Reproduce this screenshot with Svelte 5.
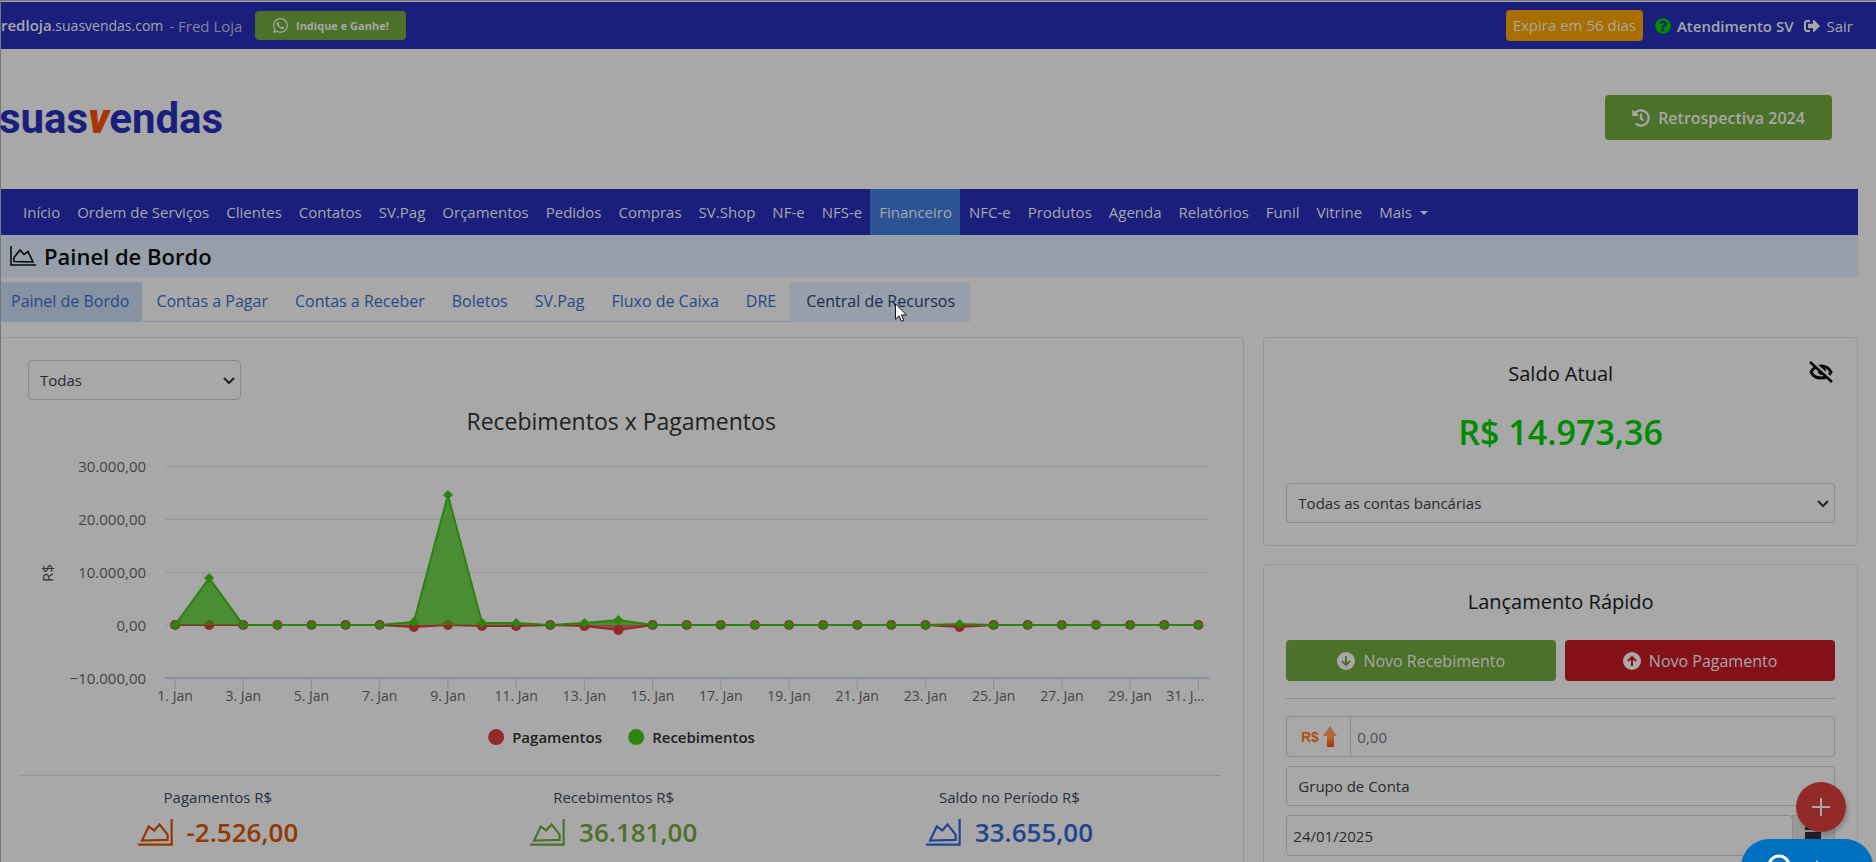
<script lang="ts">
  type Point = { x: number; y: number };

  const menu = [
    'Início', 'Ordem de Serviços', 'Clientes', 'Contatos', 'SV.Pag', 'Orçamentos', 'Pedidos',
    'Compras', 'SV.Shop', 'NF-e', 'NFS-e', 'Financeiro', 'NFC-e', 'Produtos', 'Agenda',
    'Relatórios', 'Funil', 'Vitrine'
  ];
  const tabs = ['Painel de Bordo', 'Contas a Pagar', 'Contas a Receber', 'Boletos', 'SV.Pag', 'Fluxo de Caixa', 'DRE'];

  const totals = [
    { label: 'Pagamentos R$', value: '-2.526,00', kind: 'out' },
    { label: 'Recebimentos R$', value: '36.181,00', kind: 'in' },
    { label: 'Saldo no Período R$', value: '33.655,00', kind: 'net' }
  ];

  // daily values, only the days that are not zero
  const received: Record<number, number> = { 2: 8800, 8: 650, 9: 24500, 10: 400, 11: 400, 13: 400, 14: 900, 24: 250 };
  const paid: Record<number, number> = { 8: -450, 10: -250, 11: -250, 13: -250, 14: -900, 24: -300 };

  const days = Array.from({ length: 31 }, (_, i) => i + 1);
  const levels = [
    { value: 30000, label: '30.000,00' },
    { value: 20000, label: '20.000,00' },
    { value: 10000, label: '10.000,00' },
    { value: 0, label: '0,00' },
    { value: -10000, label: '−10.000,00' }
  ];

  const dayX = (day: number) => 155 + ((day - 1) * 1023) / 30;
  const valueY = (value: number) => Math.round(225 - (value * 53) / 10000);

  function toPoints(data: Record<number, number>): Point[] {
    return days.map((day) => ({ x: dayX(day), y: valueY(data[day] ?? 0) }));
  }

  function toLine(points: Point[]) {
    return points.map((p) => `${p.x},${p.y}`).join(' ');
  }

  function toArea(points: Point[]) {
    return `${dayX(1)},${valueY(0)} ${toLine(points)} ${dayX(31)},${valueY(0)}`;
  }

  const paidPoints = toPoints(paid);
  const receivedPoints = toPoints(received);
</script>

{#snippet chevron()}
  <svg class="chevron" viewBox="0 0 12 8" aria-hidden="true"><path d="M1 1l5 5 5-5" fill="none" stroke="currentColor" stroke-width="2" /></svg>
{/snippet}

{#snippet areaIcon()}
  <svg class="area-icon" viewBox="0 0 26 20" aria-hidden="true">
    <path d="M1 0v19h25" fill="none" stroke="currentColor" stroke-width="1.6" />
    <path d="M4 15.500v-4l6-7.500 4 4.500 4-3 5 10.500z" fill="none" stroke="currentColor" stroke-width="1.6" />
  </svg>
{/snippet}

<div class="page">
  <header class="topbar">
    <div class="account">
      <span class="domain"><b>redloja</b>.suasvendas.com</span>
      <span class="store">- Fred Loja</span>
      <button type="button" class="btn refer">
        <svg viewBox="0 0 448 512" aria-hidden="true"><path fill="currentColor" d="M380.9 97.1C339 55.1 283.2 32 223.9 32c-122.4 0-222 99.6-222 222 0 39.1 10.2 77.3 29.6 111L0 480l117.7-30.9c32.4 17.7 68.9 27 106.1 27h.1c122.3 0 224.1-99.6 224.1-222 0-59.3-25.2-115-67.1-157zm-157 341.6c-33.2 0-65.7-8.9-94-25.7l-6.7-4-69.8 18.3L72 359.2l-4.4-7c-18.5-29.4-28.2-63.3-28.2-98.2 0-101.7 82.8-184.5 184.6-184.5 49.3 0 95.6 19.2 130.4 54.1 34.8 34.9 56.2 81.2 56.1 130.5 0 101.8-84.9 184.6-186.6 184.6zm101.2-138.2c-5.5-2.8-32.8-16.2-37.9-18-5.1-1.9-8.8-2.8-12.5 2.8-3.7 5.6-14.3 18-17.6 21.8-3.2 3.7-6.5 4.2-12 1.4-32.6-16.3-54-29.1-75.5-66-5.7-9.8 5.7-9.1 16.3-30.3 1.8-3.7.9-6.9-.5-9.7-1.4-2.8-12.5-30.1-17.1-41.2-4.5-10.8-9.1-9.3-12.5-9.5-3.2-.2-6.9-.2-10.6-.2-3.7 0-9.7 1.4-14.8 6.9-5.1 5.6-19.4 19-19.4 46.3 0 27.3 19.9 53.7 22.6 57.4 2.8 3.7 39.1 59.7 94.8 83.8 35.2 15.2 49 16.5 66.6 13.9 10.7-1.6 32.8-13.4 37.4-26.4 4.6-13 4.6-24.1 3.2-26.4-1.3-2.5-5-3.9-10.5-6.6z" /></svg>
        Indique e Ganhe!
      </button>
    </div>
    <div class="session">
      <span class="expires">Expira em 56 dias</span>
      <a href="#suporte" class="support">
        <svg viewBox="0 0 512 512" aria-hidden="true"><path fill="#008c00" d="M504 256c0 136.997-111.043 248-248 248S8 392.997 8 256C8 119.083 119.043 8 256 8s248 111.083 248 248zM262.655 90c-54.497 0-89.255 22.957-116.549 63.758-3.536 5.286-2.353 12.415 2.715 16.258l34.699 26.31c5.205 3.947 12.621 3.008 16.665-2.122 17.864-22.658 30.113-35.797 57.303-35.797 20.429 0 45.698 13.148 45.698 32.958 0 14.976-12.363 22.667-32.534 33.976C247.128 238.528 216 254.941 216 296v4c0 6.627 5.373 12 12 12h56c6.627 0 12-5.373 12-12v-1.333c0-28.462 83.186-29.647 83.186-106.667 0-58.002-60.165-102-116.531-102zM256 338c-25.365 0-46 20.635-46 46 0 25.364 20.635 46 46 46s46-20.636 46-46c0-25.365-20.635-46-46-46z" /></svg>
        <b>Atendimento SV</b>
      </a>
      <a href="#sair">
        <svg viewBox="0 0 512 512" aria-hidden="true"><path fill="currentColor" d="M497 273L329 441c-15 15-41 4.500-41-17v-96H152c-13.300 0-24-10.700-24-24v-96c0-13.300 10.700-24 24-24h136V88c0-21.400 25.900-32 41-17l168 168c9.300 9.400 9.300 24.600 0 34zM192 436v-40c0-6.600-5.400-12-12-12H96c-17.700 0-32-14.300-32-32V160c0-17.700 14.300-32 32-32h84c6.600 0 12-5.400 12-12V76c0-6.600-5.400-12-12-12H96c-53 0-96 43-96 96v192c0 53 43 96 96 96h84c6.600 0 12-5.400 12-12z" /></svg>
        Sair
      </a>
    </div>
  </header>

  <div class="brand">
    <a href="#inicio" class="logo">suas<i>v</i>endas</a>
    <button type="button" class="btn retro">
      <svg viewBox="0 0 512 512" aria-hidden="true"><path fill="currentColor" d="M504 255.531c.253 136.640-111.180 248.372-247.820 248.468-59.015.042-113.223-20.530-155.822-54.911-11.077-8.940-11.905-25.541-1.839-35.607l11.267-11.267c8.609-8.609 22.353-9.551 31.891-1.984C173.062 425.135 212.781 440 256 440c101.705 0 184-82.311 184-184 0-101.705-82.311-184-184-184-48.814 0-93.149 18.969-126.068 49.932l50.754 50.754c10.080 10.080 2.941 27.314-11.313 27.314H24c-8.837 0-16-7.163-16-16V38.627c0-14.254 17.234-21.393 27.314-11.314l49.372 49.372C129.209 34.136 189.552 8 256 8c136.810 0 247.747 110.780 248 247.531zm-180.912 78.784l9.823-12.630c8.138-10.463 6.253-25.542-4.210-33.679L288 256.349V152c0-13.255-10.745-24-24-24h-16c-13.255 0-24 10.745-24 24v135.651l65.409 50.874c10.463 8.137 25.541 6.253 33.679-4.210z" /></svg>
      Retrospectiva 2024
    </button>
  </div>

  <main>
    <nav class="menu">
      {#each menu as item}
        <a href="#menu" class:active={item === 'Financeiro'}>{item}</a>
      {/each}
      <a href="#mais" class="more">Mais</a>
    </nav>

    <h1>{@render areaIcon()}Painel de Bordo</h1>

    <nav class="tabs">
      {#each tabs as tab, i}
        <a href="#aba" class:active={i === 0}>{tab}</a>
      {/each}
      <a href="#recursos" class="hovered">
        Central de Recursos
        <svg class="pointer" viewBox="0 0 12 19" aria-hidden="true"><path d="M.5.8v15.500l3.600-3.400 2.400 5.400 2.300-1-2.300-5.300h5z" fill="#fff" stroke="#111" /></svg>
      </a>
    </nav>

    <div class="columns">
      <section class="card overview">
        <div class="select filter">
          <select aria-label="Filtro"><option>Todas</option></select>
          {@render chevron()}
        </div>

        <svg class="chart" viewBox="0 0 1201 360" role="img" aria-label="Recebimentos x Pagamentos">
          <text class="chart-title" x="601" y="30">Recebimentos x Pagamentos</text>
          {#each levels as level}
            <line class="grid" x1="145" x2="1189" y1={valueY(level.value) + 0.5} y2={valueY(level.value) + 0.5} />
            <text class="level" x="126" y={valueY(level.value) + 6}>{level.label}</text>
          {/each}
          <text class="unit" transform="translate(33 173) rotate(-90)">R$</text>
          <line class="axis" x1="145" x2="1189" y1="278" y2="278" />
          {#each days.filter((d) => d % 2 === 1) as day}
            <line class="tick" x1={dayX(day)} x2={dayX(day)} y1="278" y2="290" />
            <text class="day" x={day === 31 ? 1165 : dayX(day)} y="301">{day === 31 ? '31. J…' : `${day}. Jan`}</text>
          {/each}

          <polygon class="paid-area" points={toArea(paidPoints)} />
          <polyline class="paid-line" points={toLine(paidPoints)} />
          {#each paidPoints as p}
            <circle class="paid" cx={p.x} cy={p.y} r="5" />
          {/each}
          <polygon class="received-area" points={toArea(receivedPoints)} />
          <polyline class="received-line" points={toLine(receivedPoints)} />
          {#each receivedPoints as p}
            <path class="received" d={`M${p.x} ${p.y - 5}l5 5-5 5-5-5z`} />
          {/each}

          <circle class="paid" cx="476" cy="337" r="8" />
          <text class="legend" x="492" y="343">Pagamentos</text>
          <circle class="received" cx="616" cy="337" r="8" />
          <text class="legend" x="632" y="343">Recebimentos</text>
        </svg>

        <div class="totals">
          {#each totals as total}
            <div class="total {total.kind}">
              <span>{total.label}</span>
              <strong>{@render areaIcon()}{total.value}</strong>
            </div>
          {/each}
        </div>
      </section>

      <aside>
        <section class="card">
          <h2>Saldo Atual</h2>
          <button type="button" class="hide" aria-label="Ocultar saldo">
            <svg viewBox="0 0 24 22" aria-hidden="true">
              <path d="M2 11C6 3 18 3 22 11 18 19 6 19 2 11z" fill="none" stroke="currentColor" stroke-width="3" />
              <circle cx="13" cy="10" r="4" fill="currentColor" />
              <path d="M3 0l21 19" stroke="#a8a8a8" stroke-width="2.5" />
              <path d="M1 1l22 20" stroke="currentColor" stroke-width="2.5" />
            </svg>
          </button>
          <p class="balance">R$ 14.973,36</p>
          <div class="select">
            <select aria-label="Conta bancária"><option>Todas as contas bancárias</option></select>
            {@render chevron()}
          </div>
        </section>

        <section class="card entry">
          <h2>Lançamento Rápido</h2>
          <div class="actions">
            <button type="button" class="btn">
              <svg viewBox="0 0 18 18" aria-hidden="true"><circle cx="9" cy="9" r="9" fill="currentColor" /><path d="M9 4v9M5 9l4 4 4-4" fill="none" stroke="#4c7128" stroke-width="2" /></svg>
              Novo Recebimento
            </button>
            <button type="button" class="btn danger">
              <svg viewBox="0 0 18 18" aria-hidden="true"><circle cx="9" cy="9" r="9" fill="currentColor" /><path d="M9 14V5M5 9l4-4 4 4" fill="none" stroke="#851118" stroke-width="2" /></svg>
              Novo Pagamento
            </button>
          </div>
          <hr />
          <div class="group">
            <label for="amount">
              R$
              <svg viewBox="0 0 14 21" aria-hidden="true">
                <defs><linearGradient id="rise" x2="0" y2="1"><stop offset="0" stop-color="#b06a3c" /><stop offset=".5" stop-color="#b5673a" /><stop offset="1" stop-color="#a83400" /></linearGradient></defs>
                <path d="M7 0l7 10h-3v11H4V10H0z" fill="url(#rise)" />
              </svg>
            </label>
            <input id="amount" type="text" placeholder="0,00" />
          </div>
          <div class="select">
            <select aria-label="Grupo de Conta"><option>Grupo de Conta</option></select>
            {@render chevron()}
          </div>
          <div class="group">
            <input type="text" value="24/01/2025" aria-label="Data" />
            <button type="button" class="calendar" aria-label="Calendário">
              <svg viewBox="0 0 16 18" aria-hidden="true"><path d="M0 2h3V0h3v2h4V0h3v2h3v3H0zM0 7h16v11H0z" fill="#202026" /></svg>
            </button>
          </div>
        </section>
      </aside>
    </div>
  </main>

  <button type="button" class="fab" aria-label="Adicionar">
    <svg viewBox="0 0 18 18" aria-hidden="true"><path d="M9 0v18M0 9h18" stroke="currentColor" stroke-width="2" /></svg>
  </button>
  <button type="button" class="chat" aria-label="Ajuda">
    <svg viewBox="0 0 80 24" aria-hidden="true"><circle cx="12" cy="12" r="10" fill="none" stroke="#fff" stroke-width="3" /><path d="M50 6l4 10h-8z" fill="#fff" /></svg>
  </button>
</div>

<style>
  :global(body) {
    overflow: hidden;
    background: #a8a8a8;
  }

  .page {
    min-height: 100vh;
    box-sizing: border-box;
    padding-top: 1px;
    border-top: 1px solid #777777;
    border-left: 1px solid #777777;
    background: #a8a8a8;
    color: #1a1c20;
    font-family: 'Open Sans', 'Noto Sans', sans-serif;
    font-size: 15px;
    line-height: 24px;
  }

  a {
    color: inherit;
    text-decoration: none;
  }

  b {
    font-weight: 600;
  }

  svg {
    flex-shrink: 0;
  }

  .btn {
    display: flex;
    align-items: center;
    justify-content: center;
    gap: 8px;
    padding: 0;
    border: none;
    border-radius: 4px;
    background: #4c7128;
    color: #a8a8a8;
    font-family: inherit;
    font-weight: 600;
    cursor: pointer;
  }

  .topbar {
    display: flex;
    align-items: center;
    justify-content: space-between;
    height: 47px;
    padding-right: 23px;
    background: #1a1e7c;
    color: #a8a8a8;
    white-space: nowrap;
  }

  .account,
  .session,
  .session a {
    display: flex;
    align-items: center;
  }

  .domain {
    font-size: 14px;
  }

  .domain b {
    font-size: 15px;
  }

  .store {
    margin: 0 13px 0 6px;
    color: #80829a;
  }

  .refer {
    width: 151px;
    height: 29px;
    font-size: 11px;
    font-weight: 700;
  }

  .refer svg {
    width: 15px;
    height: 17px;
  }

  .session {
    gap: 12px;
  }

  .session a {
    gap: 7px;
  }

  .session svg {
    width: 16px;
    height: 16px;
  }

  .expires {
    padding: 3px 7px 4px;
    border-radius: 4px;
    background: #a86e00;
  }

  .session .support {
    gap: 6px;
    margin-right: -2px;
  }

  .brand {
    display: flex;
    align-items: center;
    justify-content: space-between;
    height: 140px;
    padding-right: 44px;
    box-sizing: border-box;
  }

  .logo {
    margin-left: -2px;
    color: #1a1e7c;
    font-family: Roboto, sans-serif;
    font-size: 42px;
    font-weight: 700;
    line-height: 48px;
  }

  .logo i {
    color: #a83400;
    font-weight: 900;
  }

  .retro {
    width: 227px;
    height: 45px;
    margin-top: -3px;
    font-size: 16px;
  }

  .retro svg {
    width: 18px;
    height: 18px;
  }

  main {
    padding-right: 18px;
  }

  .menu {
    display: flex;
    height: 46px;
    padding-left: 13px;
    background: #1a1e7c;
    color: #a8a8a8;
    line-height: 46px;
    white-space: nowrap;
  }

  .menu a {
    padding: 0 8px 0 9px;
  }

  .menu .active {
    background: #2c5494;
  }

  .more::after {
    content: '';
    display: inline-block;
    margin-left: 8px;
    border: 4px solid transparent;
    border-top-color: currentColor;
    border-bottom: 0;
    vertical-align: 3px;
  }

  h1 {
    display: flex;
    align-items: center;
    gap: 8px;
    height: 42px;
    margin: 0 0 5px;
    padding-left: 9px;
    background: #979faa;
    color: #08090c;
    font-size: 22px;
    font-weight: 600;
  }

  .area-icon {
    width: 26px;
    height: 20px;
  }

  .tabs {
    display: flex;
    width: fit-content;
    margin-bottom: 15px;
    color: #264888;
    font-size: 16px;
    line-height: 39px;
    white-space: nowrap;
  }

  .tabs a {
    padding: 0 13px 0 14px;
    border-bottom: 1px solid #8793a3;
  }

  .tabs .active {
    padding-left: 10px;
    background: #8793a3;
  }

  .tabs .hovered {
    position: relative;
    padding: 0 15px 0 17px;
    border-color: #979faa;
    background: #979faa;
    color: #1a2c50;
  }

  .pointer {
    position: absolute;
    top: 21px;
    left: 106px;
    width: 12px;
    height: 19px;
  }

  .columns {
    display: grid;
    grid-template-columns: minmax(0, 23fr) minmax(0, 11fr);
    gap: 19px;
  }

  .card {
    position: relative;
    box-sizing: border-box;
    padding: 22px;
    border: 1px solid #979797;
    border-radius: 4px;
  }

  .overview {
    padding: 22px 22px 0 19px;
    border-left: none;
  }

  .select {
    position: relative;
    height: 40px;
  }

  .filter {
    width: 213px;
    margin-left: 8px;
  }

  select,
  input {
    width: 100%;
    height: 100%;
    box-sizing: border-box;
    padding: 0 11px;
    border: 1px solid #888a92;
    border-radius: 4px;
    background: transparent;
    color: #282b30;
    font-family: inherit;
    font-size: 15px;
    appearance: none;
  }

  .chevron {
    position: absolute;
    top: 17px;
    right: 6px;
    width: 12px;
    height: 8px;
    color: #202226;
    pointer-events: none;
  }

  .entry .chevron {
    top: 20px;
  }

  .chart {
    display: block;
    width: 100%;
  }

  .chart-title {
    fill: #222222;
    font-size: 23px;
    text-anchor: middle;
  }

  .level,
  .day {
    fill: #444444;
    font-size: 14px;
  }

  .level {
    font-size: 15px;
    text-anchor: end;
  }

  .day,
  .unit {
    text-anchor: middle;
  }

  .unit {
    fill: #333333;
    font-size: 15px;
  }

  .legend {
    fill: #202020;
    font-size: 15px;
    font-weight: 600;
  }

  .grid {
    stroke: #979797;
  }

  .axis,
  .tick {
    stroke: #878f9e;
  }

  .axis {
    stroke-width: 2;
  }

  .paid {
    fill: #922a27;
  }

  .received {
    fill: #2c840e;
  }

  .paid-area {
    fill: #922a27;
    fill-opacity: 0.75;
  }

  .received-area {
    fill: #2c840e;
    fill-opacity: 0.75;
  }

  .paid-line,
  .received-line {
    fill: none;
    stroke-width: 2;
    stroke-linejoin: round;
  }

  .paid-line {
    stroke: #922a27;
  }

  .received-line {
    stroke: #2c840e;
  }

  .totals {
    display: grid;
    grid-template-columns: repeat(3, 1fr);
    margin-top: 15px;
    padding: 9px 14px 0 0;
    border-top: 1px dotted #828282;
  }

  .total {
    display: flex;
    flex-direction: column;
    align-items: center;
    color: #283040;
  }

  .total strong {
    display: flex;
    align-items: center;
    gap: 14px;
    height: 46px;
    font-size: 26px;
    font-weight: 600;
  }

  .total .area-icon,
  .total :global(.area-icon) {
    width: 35px;
    height: 27px;
    transform: scaleX(-1);
  }

  .out strong {
    color: #933800;
  }

  .in strong {
    color: #4c7128;
  }

  .net strong {
    color: #1e4690;
  }

  aside {
    display: flex;
    flex-direction: column;
    gap: 18px;
  }

  h2 {
    margin: 0;
    color: #101114;
    font-size: 20px;
    font-weight: 400;
    line-height: 28px;
    text-align: center;
  }

  .hide {
    position: absolute;
    top: 23px;
    right: 24px;
    padding: 0;
    border: none;
    background: none;
    color: #08090c;
  }

  .hide svg {
    display: block;
    width: 24px;
    height: 22px;
  }

  .balance {
    margin: 20px 0 27px;
    color: #008c00;
    font-size: 34px;
    font-weight: 600;
    line-height: 48px;
    text-align: center;
  }

  .entry {
    padding-top: 23px;
    padding-bottom: 40px;
  }

  .actions {
    display: grid;
    grid-template-columns: 1fr 1fr;
    gap: 9px;
    margin: 24px 0 17px;
  }

  .actions .btn {
    height: 41px;
    font-size: 16px;
    font-weight: 400;
  }

  .actions svg {
    width: 18px;
    height: 18px;
  }

  .actions .danger {
    background: #851118;
  }

  hr {
    margin: 0 0 17px;
    border: none;
    border-top: 1px solid #8e8e8e;
  }

  .group {
    display: flex;
    height: 41px;
    margin-bottom: 9px;
  }

  .group + .select {
    margin-bottom: 9px;
  }

  .group label {
    display: flex;
    align-items: center;
    justify-content: center;
    gap: 4px;
    width: 64px;
    flex-shrink: 0;
    box-sizing: border-box;
    border: 1px solid #888a92;
    border-right: none;
    border-radius: 4px 0 0 4px;
    color: #a85410;
    font-family: 'Liberation Sans', sans-serif;
    font-size: 14px;
    font-weight: 700;
  }

  .group label svg {
    width: 14px;
    height: 21px;
  }

  .group input {
    flex: 1;
    min-width: 0;
    padding: 0 6px;
  }

  .group label + input {
    border-radius: 0 4px 4px 0;
  }

  input::placeholder {
    color: #4a5058;
    opacity: 1;
  }

  .calendar {
    width: 43px;
    margin-left: -1px;
    padding: 0;
    border: 1px solid #888a92;
    border-radius: 0 4px 4px 0;
    background: #989898;
  }

  .calendar svg {
    width: 16px;
    height: 18px;
  }

  .fab {
    position: fixed;
    right: 30px;
    bottom: 30px;
    width: 50px;
    height: 50px;
    padding: 0;
    border: none;
    border-radius: 50%;
    background: #922a27;
    box-shadow: 2px 3px 4px rgba(0, 0, 0, 0.2);
    color: #a8a8a8;
  }

  .fab svg {
    display: block;
    width: 18px;
    height: 18px;
    margin: auto;
  }

  .chat {
    position: fixed;
    right: 3px;
    bottom: -33px;
    width: 132px;
    height: 56px;
    padding: 0;
    border: none;
    border-radius: 28px;
    background: #0070c0;
  }

  .chat svg {
    width: 80px;
    height: 24px;
  }
</style>
